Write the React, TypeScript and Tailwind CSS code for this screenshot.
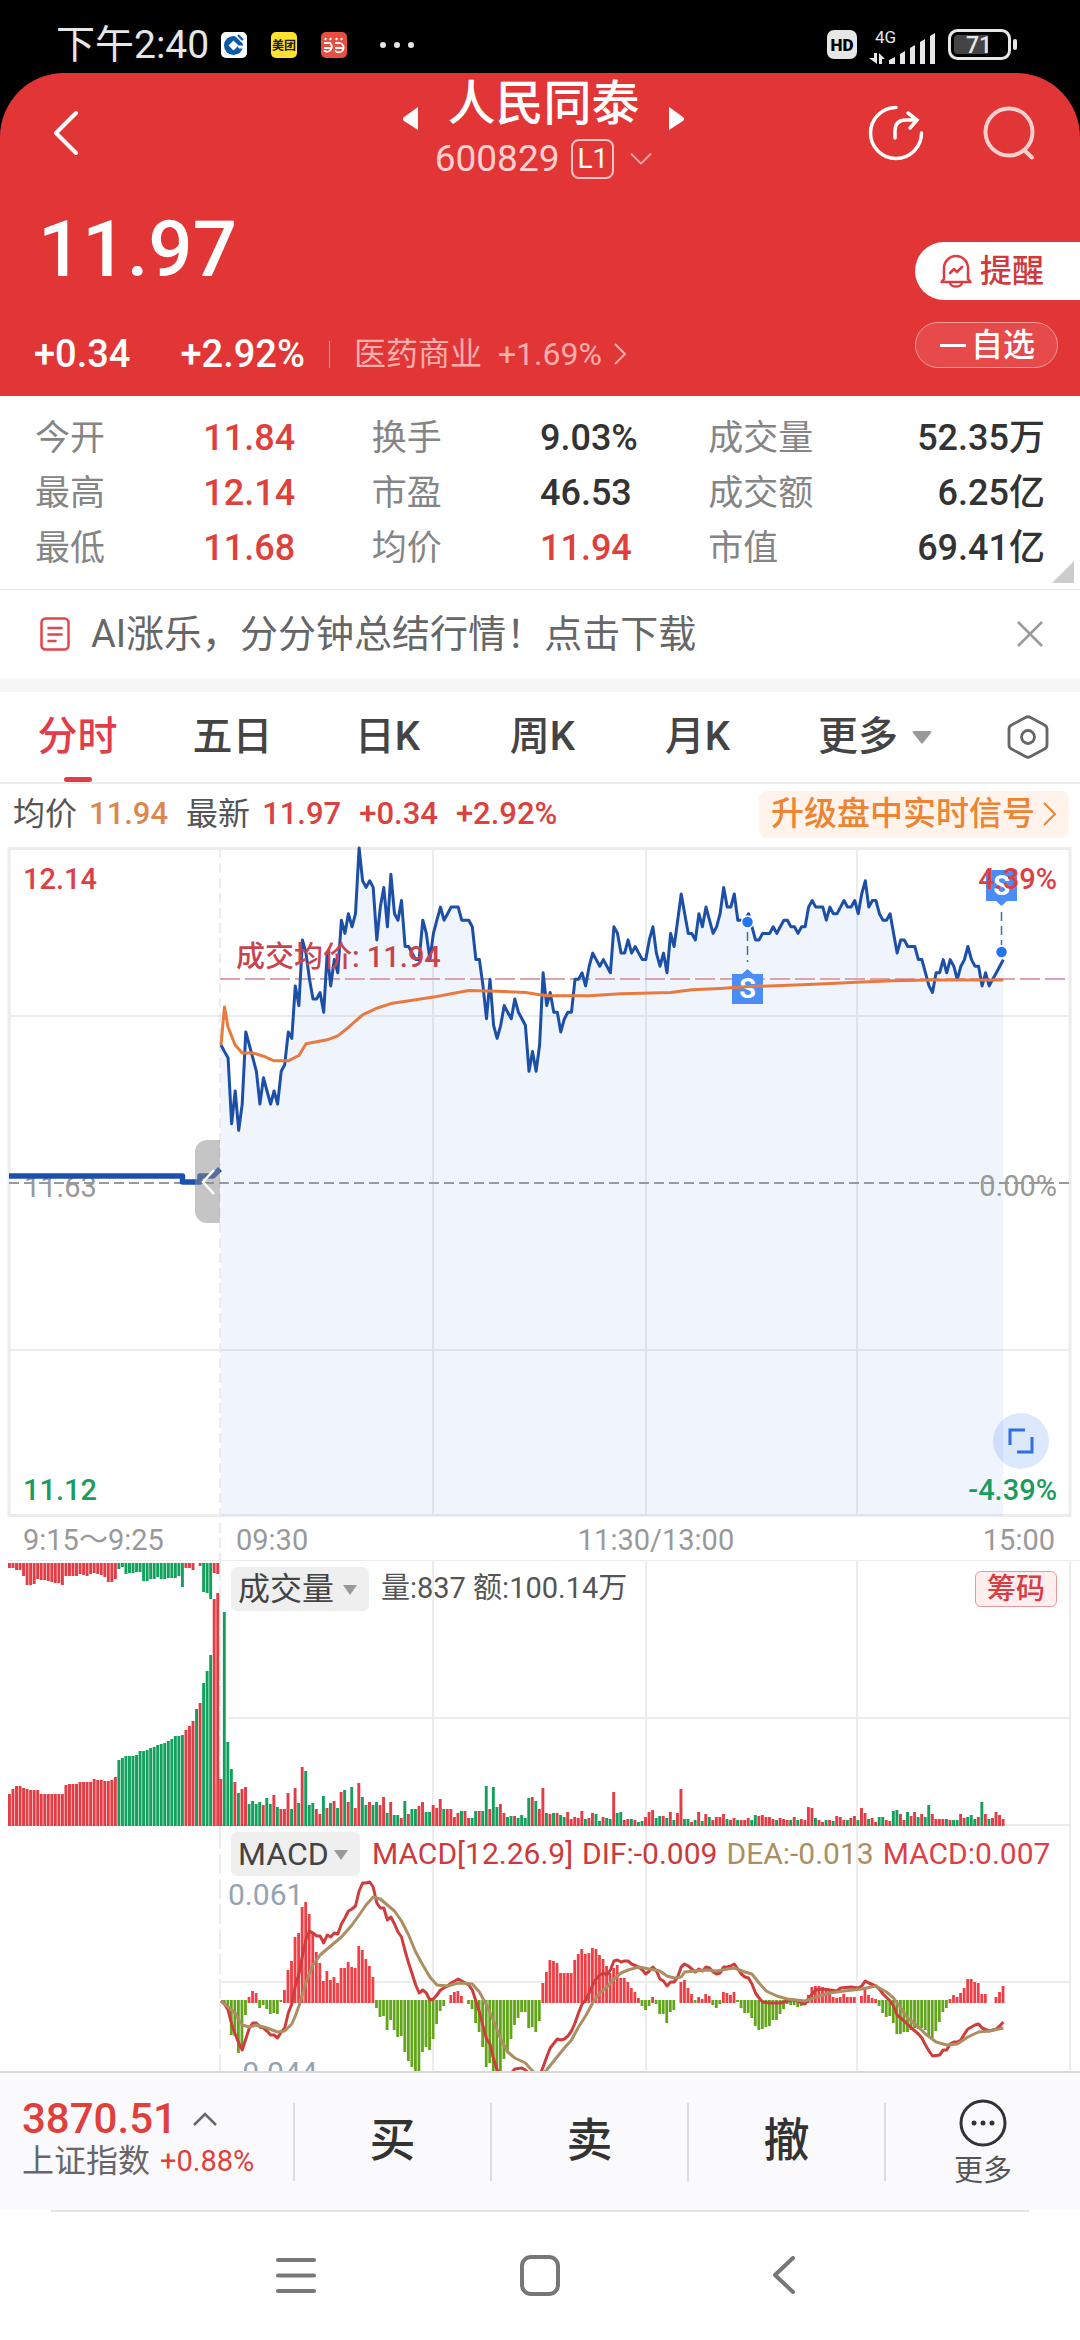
import React, { useState } from 'react';

// 每分钟价格，单位为分，相对最高价 12.14 的差值
const PRICES = [
  30, 31, 32, 42, 37, 43, 39, 28, 30, 32, 34, 39, 35, 37, 39, 37, 39, 34, 33, 28,
  29, 21, 24, 14, 16, 20, 23, 23, 22, 25, 16, 21, 17, 19, 11, 13, 10, 12, 10, 0,
  5, 6, 5, 6, 14, 9, 6, 12, 4, 10, 11, 8, 15, 15, 16, 17, 17, 11, 13, 17,
  13, 11, 9, 11, 10, 9, 9, 9, 11, 11, 11, 12, 17, 17, 21, 26, 20, 27, 29, 27,
  24, 25, 26, 23, 25, 26, 27, 34, 31, 34, 30, 19, 24, 22, 25, 25, 28, 26, 25, 25,
  20, 20, 19, 21, 18, 16, 17, 18, 17, 18, 19, 12, 13, 16, 16, 14, 16, 15, 16, 17,
  17, 14, 12, 16, 18, 16, 19, 13, 15, 11, 7, 10, 13, 13, 14, 10, 12, 9, 11, 13,
  12, 10, 6, 9, 9, 7, 11, 11, 11, 10, 12, 14, 14, 13, 13, 13, 12, 13, 12, 11,
  11, 12, 12, 13, 12, 12, 9, 8, 9, 9, 9, 11, 9, 10, 10, 9, 8, 9, 9, 8,
  10, 7, 5, 9, 8, 8, 10, 11, 11, 10, 13, 16, 14, 14, 15, 15, 15, 17, 17, 19,
  21, 22, 19, 19, 17, 19, 17, 18, 20, 18, 17, 15, 17, 18, 18, 21, 19, 21, 20, 19,
  18, 17,
];

type Point = [number, number];

const AVERAGE: Point[] = [
  [0, 30], [1, 24.2], [2, 27.3], [4, 30], [6, 31.2], [9, 31.2], [12, 31.7], [15, 32.4], [19, 32.4], [22, 31.6],
  [24, 29.8], [30, 29.2], [33, 28.6], [36, 27.3], [40, 25.4], [44, 24.4], [48, 23.7], [55, 23.1], [60, 22.7], [65, 22.2],
  [70, 21.7], [78, 21.8], [86, 22], [92, 22.5], [104, 22.5], [113, 22.2], [127, 22], [133, 21.6], [141, 21.4], [149, 21.1],
  [166, 20.8], [181, 20.4], [190, 20.2], [200, 20.1], [221, 20.1],
];

// 正数为红柱，负数为绿柱
const VOLUMES = [
  47, -214, -84, -57, 44, -33, 37, 39, -22, -25, -22, -24, 21, -28, -22, 31, -19, 17, 17, 33,
  -17, 38, -23, 59, -55, -21, -23, 17, 12, -30, 18, -23, 25, -18, 34, -36, 24, -39, 18, 43,
  -29, -21, 24, -21, -24, 21, 29, -13, 24, -11, -11, 8, -25, 12, -17, -17, 20, 24, -14, -14,
  21, 18, 27, -17, 17, 17, 9, 13, -15, 15, 8, -8, -15, 15, -15, -40, 17, -39, -19, 22,
  13, -9, -10, 10, -8, -11, -8, -28, 29, -25, 17, 38, -13, 12, -13, 13, -11, -9, 14, 7,
  9, 8, 15, -7, 8, 13, -12, -5, 9, -8, -7, 34, -13, -14, 6, 7, -7, 6, -4, -5,
  9, 14, 16, -8, -10, 10, -8, 14, -6, 13, 37, -7, -7, 4, -6, 14, -5, 12, -9, 6,
  9, 9, 12, -7, 6, 8, -6, 6, 6, 8, -6, -11, 10, 11, 9, 9, 7, -6, 8, 7,
  6, -6, 9, -6, 7, 6, 19, 18, -8, 6, 4, -6, 6, -5, 10, 9, 6, -6, 8, 10,
  -6, 18, 13, -7, 8, 4, -9, -9, 6, 5, -15, -16, 12, 6, -14, 10, 14, -9, 12, -9,
  -21, 12, 7, 7, 7, -7, 6, -6, -6, 12, 8, -9, -11, -7, 9, -24, 12, -7, 8, 14,
  11, 7,
];

// 集合竞价：匹配量与未匹配量
const AUCTION_MATCHED = [
  32, 37, 40, 40, 38, 37, 36, 36, 36, 32, 32, 32, 32, 32, 32, 32, 41, 42, 42, 42,
  44, 44, 44, 44, 47, 46, 46, 45, 45, 46, 49, -66, -68, -70, -70, -70, -71, -75, -75, -76,
  -78, -79, -81, -82, -83, -85, -87, -90, -90, -91, 96, 100, 105, -117, 123, -143, -155, -171, 227, 233,
];
const AUCTION_UNMATCHED = [
  5, 5, 7, 7, 13, 22, 22, 21, 16, 17, 17, 18, 19, 20, 20, 22, 13, 13, 13, 13,
  11, 12, 13, 11, 10, 11, 12, 14, 19, 19, 16, -6, -4, -11, -10, -10, -9, -9, -18, -18,
  -16, -16, -14, -16, -16, -15, -15, -15, -13, -24, 5, 5, 7, 0, 3, -29, -30, -36, 10, 11,
];

const MACD_BARS = [
  0, -3, -8, -35, -36, -53, -49, -15, 4, 10, 8, -8, -5, -9, -14, -13, -14, -2, 11, 31,
  40, 64, 68, 94, 99, 87, 69, 49, 38, 20, 30, 21, 24, 18, 33, 33, 39, 34, 33, 55,
  51, 42, 35, 24, -8, -17, -16, -30, -20, -30, -37, -36, -52, -61, -67, -72, -74, -52, -47, -50,
  -39, -24, -11, -6, 0, 6, 9, 10, 5, 0, -4, -9, -23, -32, -47, -67, -63, -74, -78, -74,
  -59, -52, -39, -25, -18, -12, -12, -28, -27, -32, -21, 18, 29, 41, 40, 38, 28, 28, 28, 28,
  41, 47, 52, 47, 48, 53, 52, 46, 42, 35, 28, 33, 36, 23, 23, 19, 13, 9, 3, -6,
  -10, -6, 4, -4, -14, -14, -23, -12, -10, 0, 19, 21, 13, 7, -3, 4, 2, 7, 5, -5,
  -8, -4, 9, 8, 6, 9, -2, -8, -13, -13, -18, -26, -30, -29, -27, -26, -20, -20, -14, -9,
  -4, -5, -5, -7, -6, -5, 6, 14, 15, 15, 14, 11, 10, 4, 3, 4, 7, 4, 4, 4,
  0, 5, 12, 6, 3, 2, -6, -13, -17, -16, -23, -34, -34, -32, -32, -30, -28, -29, -28, -30,
  -36, -38, -31, -22, -12, -8, 2, 6, 4, 8, 13, 22, 22, 19, 18, 7, 7, 0, 0, 4,
  9, 15,
];

const DIF: Point[] = [
  [0, 0], [1, -3], [2, -9], [3, -23], [4, -33], [5, -42], [6, -49], [7, -38], [8, -27], [9, -22],
  [10, -22], [11, -26], [12, -27], [13, -30], [14, -34], [15, -34], [16, -37], [17, -31], [18, -27], [19, -12],
  [20, -3], [21, 15], [22, 27], [23, 45], [24, 62], [25, 70], [26, 68], [27, 65], [28, 65], [29, 58],
  [30, 66], [31, 64], [32, 68], [33, 67], [34, 77], [35, 83], [36, 90], [37, 92], [38, 95], [39, 110],
  [40, 118], [41, 118], [42, 119], [43, 114], [44, 98], [45, 93], [46, 93], [47, 81], [48, 84], [49, 77],
  [50, 69], [51, 64], [52, 50], [53, 38], [54, 27], [55, 16], [56, 8], [57, 11], [58, 8], [59, 1],
  [60, 2], [61, 6], [62, 11], [64, 15], [65, 18], [67, 22], [68, 20], [69, 18], [70, 16], [71, 11],
  [72, 0], [73, -11], [74, -25], [75, -38], [76, -43], [77, -58], [78, -69], [80, -78], [82, -72], [83, -68],
  [85, -67], [86, -69], [88, -76], [90, -75], [91, -66], [92, -56], [93, -47], [95, -38], [96, -39], [97, -38],
  [98, -35], [99, -30], [100, -22], [101, -12], [102, -3], [103, 1], [104, 8], [105, 16], [106, 22], [107, 26],
  [108, 28], [109, 26], [110, 31], [111, 40], [112, 41], [113, 39], [114, 40], [115, 40], [116, 37], [118, 34],
  [119, 31], [120, 27], [121, 30], [122, 34], [123, 30], [124, 22], [125, 20], [126, 15], [127, 19], [128, 19],
  [129, 24], [130, 34], [131, 37], [132, 35], [133, 32], [134, 29], [135, 32], [136, 30], [137, 34], [138, 33],
  [139, 29], [140, 27], [141, 28], [142, 34], [143, 34], [144, 35], [145, 37], [146, 32], [147, 27], [148, 24],
  [149, 23], [150, 17], [151, 8], [152, 3], [153, -1], [155, -2], [158, -2], [159, -1], [161, 1], [163, 0],
  [164, -2], [165, -3], [166, 3], [167, 7], [168, 11], [170, 12], [172, 11], [174, 10], [175, 13], [178, 14],
  [180, 13], [181, 15], [182, 20], [183, 18], [185, 15], [186, 12], [187, 7], [189, 0], [190, -5], [191, -14],
  [193, -20], [195, -27], [197, -33], [198, -37], [199, -44], [200, -50], [201, -55], [203, -54], [204, -49], [205, -49],
  [206, -43], [207, -41], [208, -41], [209, -39], [210, -33], [211, -28], [213, -24], [214, -23], [215, -27], [217, -30],
  [219, -28], [220, -25], [221, -21],
];

const DEA: Point[] = [
  [0, 0], [2, -6], [4, -12], [5, -19], [6, -24], [8, -26], [10, -24], [13, -27], [16, -31], [18, -30],
  [20, -23], [21, -15], [22, -5], [23, 7], [24, 18], [25, 28], [26, 36], [28, 46], [31, 55], [34, 64],
  [37, 76], [39, 86], [41, 96], [43, 104], [45, 102], [47, 96], [49, 90], [51, 80], [53, 66], [55, 49],
  [57, 36], [59, 24], [61, 16], [64, 15], [67, 18], [71, 17], [73, 9], [75, -4], [77, -20], [79, -38],
  [81, -51], [83, -57], [86, -62], [88, -70], [90, -76], [92, -69], [94, -60], [97, -47], [99, -39], [101, -26],
  [103, -15], [105, -2], [107, 8], [109, 14], [111, 22], [113, 28], [115, 31], [118, 34], [121, 32], [124, 30],
  [126, 25], [128, 23], [130, 24], [131, 29], [134, 30], [137, 31], [140, 30], [143, 32], [145, 33], [148, 29],
  [150, 27], [152, 18], [154, 10], [157, 5], [160, 2], [165, 0], [168, 4], [172, 8], [176, 10], [181, 12],
  [185, 15], [188, 9], [190, 3], [192, -7], [194, -17], [197, -26], [199, -33], [202, -41], [205, -44], [208, -43],
  [211, -36], [214, -31], [217, -30], [221, -27],
];

const RED = '#e23c44';
const GREEN = '#12a05c';
const GRID = '#ececec';

const minuteX = (m: number) => 221 + m * 3.54;
const priceY = (cents: number) => 8 + cents * 6.567;
const toPoints = (pts: Point[]) => pts.map(([x, y]) => `${x.toFixed(1)},${y.toFixed(1)}`).join(' ');

const STATS = [
  { label: '今开', value: '11.84', up: true },
  { label: '换手', value: '9.03%' },
  { label: '成交量', value: '52.35万' },
  { label: '最高', value: '12.14', up: true },
  { label: '市盈', value: '46.53' },
  { label: '成交额', value: '6.25亿' },
  { label: '最低', value: '11.68', up: true },
  { label: '均价', value: '11.94', up: true },
  { label: '市值', value: '69.41亿' },
];

const TABS = ['分时', '五日', '日K', '周K', '月K'];

const StatusBar: React.FC = () => (
  <div className="flex items-center justify-between h-[73px] pt-4 pl-[56px] pr-[62px] bg-black text-[#e6e6e6]">
    <div className="flex items-center">
      <span className="text-[39px] leading-[44px]">下午2:40</span>
      <svg className="ml-3 w-[26px] h-[26px]" viewBox="0 0 26 26">
        <rect width="26" height="26" rx="5" fill="#fff" />
        <circle cx="12.500" cy="13.500" r="9.500" fill="#0f5aa8" />
        <path d="M12.500 8.500l5 5-5 5-5-5z" fill="#fff" />
        <path d="M16 13.500h8v3l-6 0z" fill="#fff" />
        <path d="M14 3l8 8" stroke="#fff" strokeWidth="1.200" />
        <path d="M17 3l5 5" stroke="#0f5aa8" strokeWidth="2" />
      </svg>
      <svg className="ml-6 w-[26px] h-[26px]" viewBox="0 0 26 26">
        <rect width="26" height="26" rx="5" fill="#ffe033" />
        <text x="13" y="17.5" textAnchor="middle" fontSize="12" fontWeight="700" fill="#1a1a1a">美团</text>
      </svg>
      <svg className="ml-6 w-[26px] h-[26px]" viewBox="0 0 26 26">
        <rect width="26" height="26" rx="5" fill="#e94f41" />
        <g fill="none" stroke="#fff" strokeWidth="1.8">
          <path d="M3 11h6a4.8 4.8 0 1 1-6 7.500M3 16h7" />
          <path d="M14 11h5a4.800 4.800 0 1 1-5 7.500M14 16h8" />
        </g>
        <path d="M4 8l1-2M9 8l1-2M15 8l1-2M20 8l1-2" stroke="#fff" strokeWidth="2" />
      </svg>
      <svg className="ml-8 w-[36px] h-[8px]" viewBox="0 0 36 8" fill="#e6e6e6">
        <circle cx="4" cy="4" r="3" />
        <circle cx="18" cy="4" r="3" />
        <circle cx="32" cy="4" r="3" />
      </svg>
    </div>
    <div className="flex items-center">
      <svg className="w-[30px] h-[29px]" viewBox="0 0 30 29">
        <rect width="30" height="29" rx="7" fill="#e6e6e6" />
        <text x="15" y="20.500" textAnchor="middle" fontSize="17" fontWeight="900" fill="#000">HD</text>
      </svg>
      <svg className="ml-3 w-[67px] h-[40px]" viewBox="0 -6 67 40" fill="#e6e6e6">
        <text x="6" y="12" fontSize="17">4G</text>
        <path d="M5 22h3v11L0 27h5zM10 33V22l6 6h-3v5z" />
        <path d="M20 29l6-3v7h-6zM31 23l5-3v13h-5zM41 17l5-3v19h-5zM51 11l5-3v25h-5zM61 5l5-3v31h-5z" />
      </svg>
      <svg className="ml-3 w-[70px] h-[31px]" viewBox="0 0 70 31">
        <rect x="1.500" y="1.500" width="60" height="28" rx="8" fill="none" stroke="#e6e6e6" strokeWidth="3" />
        <path d="M10 6h30v19H10a4 4 0 0 1-4-4V10a4 4 0 0 1 4-4z" fill="#444" />
        <rect x="65" y="10" width="4" height="11" rx="2" fill="#e6e6e6" />
        <text x="31" y="24" textAnchor="middle" fontSize="23" fontWeight="500" fill="#e6e6e6">71</text>
      </svg>
    </div>
  </div>
);

const Header: React.FC = () => (
  <div className="bg-black">
    <header className="rounded-t-[64px] bg-[#e23536] text-white pt-[2px] pb-[22px]">
      <div className="flex items-center h-[116px]">
        <div className="flex-1 pl-[52px]">
          <button type="button" aria-label="返回" className="block">
            <svg className="w-[28px] h-[46px]" viewBox="0 0 28 46" fill="none" stroke="#fff" strokeWidth="4" strokeLinecap="round" strokeLinejoin="round">
              <path d="M24 3L4 23l20 20" />
            </svg>
          </button>
        </div>
        <div className="flex items-center gap-4">
          <button type="button" aria-label="上一只" className="mb-[30px]">
            <svg className="w-[16px] h-[23px]" viewBox="0 0 16 23" fill="#fff"><path d="M15 0v23L1 14q-2-2 0-4z" /></svg>
          </button>
          <div className="flex flex-col items-center pb-1">
            <h1 className="text-[48px] leading-[56px] font-medium">人民同泰</h1>
            <button type="button" className="flex items-center gap-3 leading-[54px]">
              <span className="text-[37px] text-[#ffd0d0]">600829</span>
              <span className="border-2 border-[#f9c4c4] rounded-[8px] px-1 text-[28px] leading-[36px]">L1</span>
              <svg className="ml-1 w-[22px] h-[14px]" viewBox="0 0 24 14" fill="none" stroke="#f6a5a5" strokeWidth="2"><path d="M1 1l11 11L23 1" /></svg>
            </button>
          </div>
          <button type="button" aria-label="下一只" className="mb-[30px]">
            <svg className="w-[16px] h-[23px]" viewBox="0 0 16 23" fill="#fff"><path d="M1 0v23l14-9q2-2 0-4z" /></svg>
          </button>
        </div>
        <div className="flex-1 flex items-center justify-end gap-[59px] pr-[45px]">
          <button type="button" aria-label="分享">
            <svg className="w-[56px] h-[56px]" viewBox="0 0 56 56" fill="none" stroke="#fff" strokeWidth="3.500" strokeLinecap="round">
              <path d="M28 2.500A25.500 25.500 0 1 0 53.500 28" />
              <path d="M27 33V26q0-11 11-11h10M40 8l9 7-7 8" />
            </svg>
          </button>
          <button type="button" aria-label="搜索">
            <svg className="w-[52px] h-[54px]" viewBox="0 0 52 54" fill="none" stroke="#f8cfcf" strokeWidth="4" strokeLinecap="round">
              <circle cx="26" cy="26" r="23.500" />
              <path d="M41 44l8 7.500" />
            </svg>
          </button>
        </div>
      </div>

      <div className="flex justify-between mt-[15px]">
        <div className="pl-[34px]">
          <div className="pl-1 text-[78px] leading-[88px] font-medium">11.97</div>
          <div className="flex items-center mt-10 text-[38px] leading-10 font-medium">
            <span>+0.34</span>
            <span className="ml-[50px]">+2.92%</span>
            <span className="mx-6 w-[1px] h-[27px] bg-[#f09a9a]" />
            <button type="button" className="flex items-center text-[#ffaeae] text-[32px] font-normal">
              <span>医药商业</span>
              <span className="ml-4">+1.69%</span>
              <svg className="ml-3 w-[13px] h-[22px]" viewBox="0 0 13 22" fill="none" stroke="#ffaeae" strokeWidth="2"><path d="M1 1l10 10L1 21" /></svg>
            </button>
          </div>
        </div>
        <div className="flex flex-col items-start gap-[22px] mt-9 w-[165px]">
          <button type="button" className="flex items-center gap-2 w-full h-[58px] pl-[25px] rounded-l-full bg-white text-[#cf3a3e] text-[32px] font-medium">
            <svg className="w-[32px] h-[34px]" viewBox="0 0 32 34" fill="none" stroke="#dd3d42" strokeWidth="2.500" strokeLinejoin="round" strokeLinecap="round">
              <path d="M4 25V14a12 12 0 0 1 24 0v11l2.500 3h-29z" />
              <path d="M10 29q1 3.500 6 3.500t6-3.500" />
              <path d="M10 19l4-4 3 3 5-5" />
            </svg>
            提醒
          </button>
          <button type="button" className="flex items-center gap-[5px] w-[143px] h-[46px] pl-6 rounded-full border border-[#f09a9a] bg-[#e64a4b] text-[32px] leading-[42px] font-medium">
            <span className="w-[26px] h-[3px] bg-white" />
            自选
          </button>
        </div>
      </div>
    </header>
  </div>
);

const Stats: React.FC = () => (
  <section className="relative pt-[15px] pb-[13px] px-[35px] border-b-[1px] border-[#e8e8e8]">
    <dl className="grid grid-cols-3 text-[36px] leading-[55px]">
      {STATS.map((s, i) => (
        <div key={s.label} className="grid grid-cols-2">
          <dt className="text-[#858585] text-[35px] whitespace-nowrap">{s.label}</dt>
          <dd className={`whitespace-nowrap font-medium ${s.up ? 'text-[#e0403c]' : 'text-[#333]'} ${i % 3 === 2 ? 'flex justify-end' : ''}`}>{s.value}</dd>
        </div>
      ))}
    </dl>
    <svg className="absolute right-[6px] bottom-[6px] w-[22px] h-[22px]" viewBox="0 0 22 22" fill="#ccc"><path d="M22 0v22H0z" /></svg>
  </section>
);

const PriceChart: React.FC = () => {
  const line: Point[] = PRICES.map((p, i) => [minuteX(i), priceY(p)]);
  const last = line[line.length - 1];
  return (
    <div className="relative">
      <svg className="block w-full" viewBox="0 0 1080 721" fontSize="29">
        <g stroke={GRID} strokeWidth="2" fill="none">
          <path d="M9 8.500H1070V675.500H9z" strokeWidth="3" />
          <path d="M9 176H1070M9 510H1070M433 8V676M646 8V676M857 8V676" />
          <path d="M220 8V721" strokeDasharray="10 5" />
          <path d="M8 721H1080" />
        </g>
        <text x="24" y="357" fill="#999">11.63</text>
        <polygon points={`${toPoints(line)} ${last[0].toFixed(1)},676 221,676`} fill="#3f7de8" fillOpacity="0.08" />
        <path d="M9 343H1070" stroke="#96999e" strokeWidth="2" strokeDasharray="10 5" />
        <path d="M220 139H1070" stroke="#dca3aa" strokeWidth="2" strokeDasharray="20 5" />
        <path d="M9 336H182.500V342H200V336H213L220 329" fill="none" stroke="#1c4fae" strokeWidth="5.500" strokeLinejoin="round" />
        <polyline points={toPoints(line)} fill="none" stroke="#1c4fa8" strokeWidth="3" strokeLinejoin="round" />

        <path d="M747.500 92V122M1001.500 72V105" stroke="#3a6db8" strokeWidth="1.500" strokeDasharray="9 5" />
        <path d="M732 134h10l5.500-5 5.500 5h10v30h-31z" fill="#4a8df8" />
        <text x="747.500" y="158" textAnchor="middle" fontSize="27" fontWeight="700" fill="#fff">S</text>
        <path d="M986 30h31v31h-10l-5.500 5-5.500-5h-10z" fill="#4a8df8" />
        <text x="1001.500" y="55" textAnchor="middle" fontSize="27" fontWeight="700" fill="#fff">S</text>
        <circle cx="747.500" cy="82" r="6" fill="#2475f5" stroke="#fff" strokeWidth="1.500" />
        <circle cx="1001.500" cy="112" r="6" fill="#2475f5" stroke="#fff" strokeWidth="1.500" />
        <polyline points={toPoints(AVERAGE.map(([m, p]) => [minuteX(m), priceY(p)]))} fill="none" stroke="#e9793f" strokeWidth="3" strokeLinejoin="round" />

        <g fontWeight="500">
          <text x="23" y="49" fill="#dc3f46">12.14</text>
          <text x="1057" y="49" textAnchor="end" fill="#dc3f46">4.39%</text>
          <text x="236" y="127" fill="#c9434f">成交均价: 11.94</text>
          <text x="23" y="660" fill="#1a9c5e">11.12</text>
          <text x="1057" y="660" textAnchor="end" fill="#1a9c5e">-4.39%</text>
        </g>
        <g fill="#999">
          <text x="1057" y="356" textAnchor="end">0.00%</text>
          <text x="23" y="710">9:15～9:25</text>
          <text x="236" y="710">09:30</text>
          <text x="656" y="710" textAnchor="middle">11:30/13:00</text>
          <text x="1055" y="710" textAnchor="end">15:00</text>
        </g>
      </svg>
      <button type="button" aria-label="收起竞价" className="absolute left-[195px] top-[300px] w-[25px] h-[83px] rounded-l-[12px] bg-[#8c8c8c]/50">
        <svg className="ml-1 w-[18px] h-[28px]" viewBox="0 0 18 28" fill="none" stroke="#fff" strokeWidth="2.500"><path d="M15 2L4 14l11 12" /></svg>
      </button>
      <button type="button" aria-label="全屏" className="absolute right-[31px] top-[573px] flex items-center justify-center w-[56px] h-[56px] rounded-full bg-[#3f7de8]/18">
        <svg className="w-[28px] h-[28px]" viewBox="0 0 28 28" fill="none" stroke="#2f6fe0" strokeWidth="3"><path d="M3 18V3h15M10 25h15V10" /></svg>
      </button>
    </div>
  );
};

const IndicatorSelect: React.FC<{ label: string; options: string[]; wide?: boolean }> = ({ label, options, wide }) => (
  <div className={`relative h-[44px] rounded-[6px] bg-[#efefef] ${wide ? 'w-[138px]' : 'w-[129px]'}`}>
    <select aria-label={label} className="block w-full h-full pl-[7px] appearance-none bg-transparent text-[32px] leading-[44px] text-[#444] outline-none">
      {options.map((o) => <option key={o}>{o}</option>)}
    </select>
    <svg className="absolute right-[12px] top-[18px] w-[14px] h-[10px] pointer-events-none" viewBox="0 0 14 10" fill="#999"><path d="M0 0h14L7 10z" /></svg>
  </div>
);

const VolumeChart: React.FC = () => (
  <div className="relative">
    <svg className="block w-full" viewBox="0 0 1080 268">
      <g stroke={GRID} strokeWidth="2" fill="none">
        <path d="M228 157H1070M220 264H1070M433 0V268M646 0V268M857 0V268M1070 0V268" />
        <path d="M220 0V268" strokeDasharray="20 5" />
      </g>
      {AUCTION_MATCHED.map((v, i) => (
        <rect key={i} x={8 + i * 3.53} y={265 - Math.abs(v)} width="2.900" height={Math.abs(v)} fill={v > 0 ? RED : GREEN} />
      ))}
      {AUCTION_UNMATCHED.map((v, i) => (
        <rect key={i} x={8 + i * 3.53} y="2" width="2.900" height={Math.abs(v)} fill={v > 0 ? RED : GREEN} />
      ))}
      {VOLUMES.map((v, i) => (
        <rect key={i} x={minuteX(i) - 1.7} y={265 - Math.abs(v)} width="2.900" height={Math.abs(v)} fill={v > 0 ? RED : GREEN} />
      ))}
    </svg>
    <div className="absolute inset-x-0 top-[6px] flex items-center pl-[231px] pr-[23px] text-[29px] text-[#555]">
      <IndicatorSelect label="副图指标" options={['成交量', '成交额']} wide />
      <span className="ml-3">量:837 额:100.14万</span>
      <button type="button" className="ml-auto h-[36px] px-[11px] rounded-[6px] border border-[#e59a9c] bg-[#ffeeee] text-[#d93c43] leading-[30px] font-medium">筹码</button>
    </div>
  </div>
);

const MacdChart: React.FC = () => (
  <div className="relative flex-1 min-h-0 overflow-hidden">
    <svg className="block w-full" viewBox="0 0 1080 242">
      <g stroke={GRID} strokeWidth="2" fill="none">
        <path d="M220 153H1070M433 0V242M646 0V242M857 0V242M1070 0V242" />
        <path d="M220 0V242" strokeDasharray="20 5" />
      </g>
      {MACD_BARS.map((v, i) => v !== 0 && (
        <rect
          key={i}
          x={minuteX(i) - 1.7}
          y={v > 0 ? 172 - v : 171}
          width="2.800"
          height={v > 0 ? v + 2 : -v}
          fill={v > 0 ? '#ef3f46' : '#62a51b'}
        />
      ))}
      <text x="228" y="76" fontSize="30" fill="#93a3b1">0.061</text>
      <text x="234" y="254" fontSize="30" fill="#93a3b1">-0.044</text>
      <g fill="none" strokeWidth="3" strokeLinejoin="round">
        <polyline points={toPoints(DIF.map(([m, v]) => [minuteX(m), 172 - v]))} stroke="#cf3c3c" />
        <polyline points={toPoints(DEA.map(([m, v]) => [minuteX(m), 172 - v]))} stroke="#ab8f62" />
      </g>
    </svg>
    <div className="absolute inset-x-0 top-[2px] flex items-center pl-[231px] text-[30px] whitespace-nowrap">
      <IndicatorSelect label="技术指标" options={['MACD', 'KDJ', 'RSI']} />
      <span className="ml-3 text-[#cc3a3c]">MACD[12.26.9]</span>
      <span className="ml-[9px] text-[#cc3a3c]">DIF:-0.009</span>
      <span className="ml-[9px] text-[#ab8f62]">DEA:-0.013</span>
      <span className="ml-[9px] text-[#dd3f47]">MACD:0.007</span>
    </div>
  </div>
);

const TradeBar: React.FC = () => (
  <footer className="grid grid-cols-[293fr_197fr_197fr_197fr_196fr] items-center h-[139px] border-t-2 border-[#d9d9db] bg-[#fafafc]">
    <button type="button" className="pl-[22px] pb-[6px] text-left text-[#e0403c]">
      <span className="flex items-center gap-4 text-[42px] leading-[44px] font-medium">
        3870.51
        <svg className="w-[24px] h-[14px]" viewBox="0 0 24 14" fill="none" stroke="#666" strokeWidth="2.500"><path d="M1 13L12 2l11 11" /></svg>
      </span>
      <span className="flex items-center gap-[10px] leading-10">
        <span className="text-[32px] text-[#66666c]">上证指数</span>
        <span className="text-[29px]">+0.88%</span>
      </span>
    </button>
    {['买', '卖', '撤'].map((t) => (
      <button type="button" key={t} className="h-[78px] pb-1 border-l-2 border-[#dcdcde] text-[46px] leading-[74px] font-medium text-[#333]">{t}</button>
    ))}
    <button type="button" className="flex flex-col items-center justify-center h-[78px] pt-[6px] border-l-2 border-[#dcdcde] text-[29px] leading-10 text-[#555]">
      <svg className="shrink-0 w-[48px] h-[48px]" viewBox="0 0 48 48" fill="none" stroke="#333" strokeWidth="3">
        <circle cx="24" cy="24" r="22" />
        <g fill="#333" stroke="none"><circle cx="15" cy="24" r="2.500" /><circle cx="24" cy="24" r="2.500" /><circle cx="33" cy="24" r="2.500" /></g>
      </svg>
      <span className="mt-1">更多</span>
    </button>
  </footer>
);

const SystemNav: React.FC = () => (
  <nav className="mx-[51px] flex items-center justify-center gap-[202px] h-[130px] border-t-2 border-[#e4e4e6]">
    <button type="button" aria-label="最近任务">
      <svg className="w-[42px] h-[40px]" viewBox="0 0 42 40" stroke="#777" strokeWidth="4" strokeLinecap="round"><path d="M3 4h36M3 19.500h36M3 35h36" /></svg>
    </button>
    <button type="button" aria-label="主屏幕">
      <svg className="w-[42px] h-[42px]" viewBox="0 0 42 42" fill="none" stroke="#777" strokeWidth="4"><rect x="3" y="2" width="36" height="37" rx="9" /></svg>
    </button>
    <button type="button" aria-label="后退">
      <svg className="w-[42px] h-[40px]" viewBox="0 0 42 40" fill="none" stroke="#777" strokeWidth="4" strokeLinecap="round" strokeLinejoin="round"><path d="M30 2L12 19l18 17" /></svg>
    </button>
  </nav>
);

const App: React.FC = () => {
  const [activeTab, setActiveTab] = useState('分时');

  return (
    <div lang="zh-CN" className="min-h-screen flex flex-col bg-white font-['Roboto','Noto_Sans_CJK_SC',sans-serif]">
      <StatusBar />
      <Header />
      <Stats />

      <section className="flex items-center justify-between h-[88px] pl-10 pr-[37px]">
        <a href="#download" className="flex items-center gap-[21px] text-[38px] text-[#666]">
          <svg className="w-[30px] h-[34px]" viewBox="0 0 30 34" fill="none" stroke="#e0474d" strokeWidth="2.500" strokeLinecap="round">
            <rect x="1.500" y="1.500" width="27" height="31" rx="4" />
            <path d="M8.500 11h13M8.500 17.500h13M8.500 24h7" />
          </svg>
          AI涨乐，分分钟总结行情！点击下载
        </a>
        <button type="button" aria-label="关闭">
          <svg className="w-[26px] h-[26px]" viewBox="0 0 26 26" stroke="#999" strokeWidth="2.500"><path d="M1 1l24 24M25 1L1 25" /></svg>
        </button>
      </section>
      <div className="h-[14px] bg-[#f7f7f7]" />

      <nav className="grid grid-cols-[repeat(5,155fr)_200fr_105fr] h-[92px] border-b-2 border-[#ebebeb] text-[40px] text-[#444] font-medium">
        {TABS.map((t) => (
          <button
            type="button"
            key={t}
            onClick={() => setActiveTab(t)}
            className={`relative ${t === activeTab ? 'text-[#e23c48]' : ''}`}
          >
            {t}
            {t === activeTab && <span className="absolute left-1/2 bottom-0 -translate-x-1/2 w-[28px] h-[5px] rounded-full bg-[#e23c48]" />}
          </button>
        ))}
        <button type="button" className="flex items-center justify-center gap-[14px]">
          更多
          <svg className="w-[20px] h-[13px]" viewBox="0 0 20 13" fill="#999"><path d="M2 0h16q2 0 1 2l-8 10q-1 1-2 0L1 2Q0 0 2 0z" /></svg>
        </button>
        <button type="button" aria-label="图表设置" className="flex items-center justify-center">
          <svg className="w-[42px] h-[44px]" viewBox="0 0 42 44" fill="none" stroke="#666" strokeWidth="2.800" strokeLinejoin="round">
            <path d="M18.500 2.500q2.500-1.500 5 0L37.500 10q2.500 1.500 2.500 4v16q0 2.500-2.500 4L23.500 41.500q-2.500 1.500-5 0L4.500 34Q2 32.500 2 30V14q0-2.500 2.500-4z" />
            <circle cx="21" cy="22" r="6.500" />
          </svg>
        </button>
      </nav>

      <div className="flex items-center h-[56px] pt-1 pl-[13px] pr-[11px] text-[32px] text-[#555] whitespace-nowrap">
        <span>均价</span>
        <span className="ml-3 text-[31px] text-[#dd8650] font-medium">11.94</span>
        <span className="ml-[18px]">最新</span>
        <span className="ml-3 text-[31px] text-[#dc403f] font-medium">11.97</span>
        <span className="ml-[18px] text-[31px] text-[#dc403f] font-medium">+0.34</span>
        <span className="ml-[18px] text-[31px] text-[#dc403f] font-medium">+2.92%</span>
        <button type="button" className="ml-auto flex items-center gap-2 h-[47px] px-3 rounded-[8px] bg-[#fff3eb] text-[33px] text-[#ee8331] font-medium">
          升级盘中实时信号
          <svg className="w-[14px] h-[24px]" viewBox="0 0 14 24" fill="none" stroke="#ee8331" strokeWidth="2"><path d="M1 1l11 11L1 23" /></svg>
        </button>
      </div>

      <PriceChart />
      <VolumeChart />
      <MacdChart />
      <TradeBar />
      <SystemNav />
    </div>
  );
};

export default App;
